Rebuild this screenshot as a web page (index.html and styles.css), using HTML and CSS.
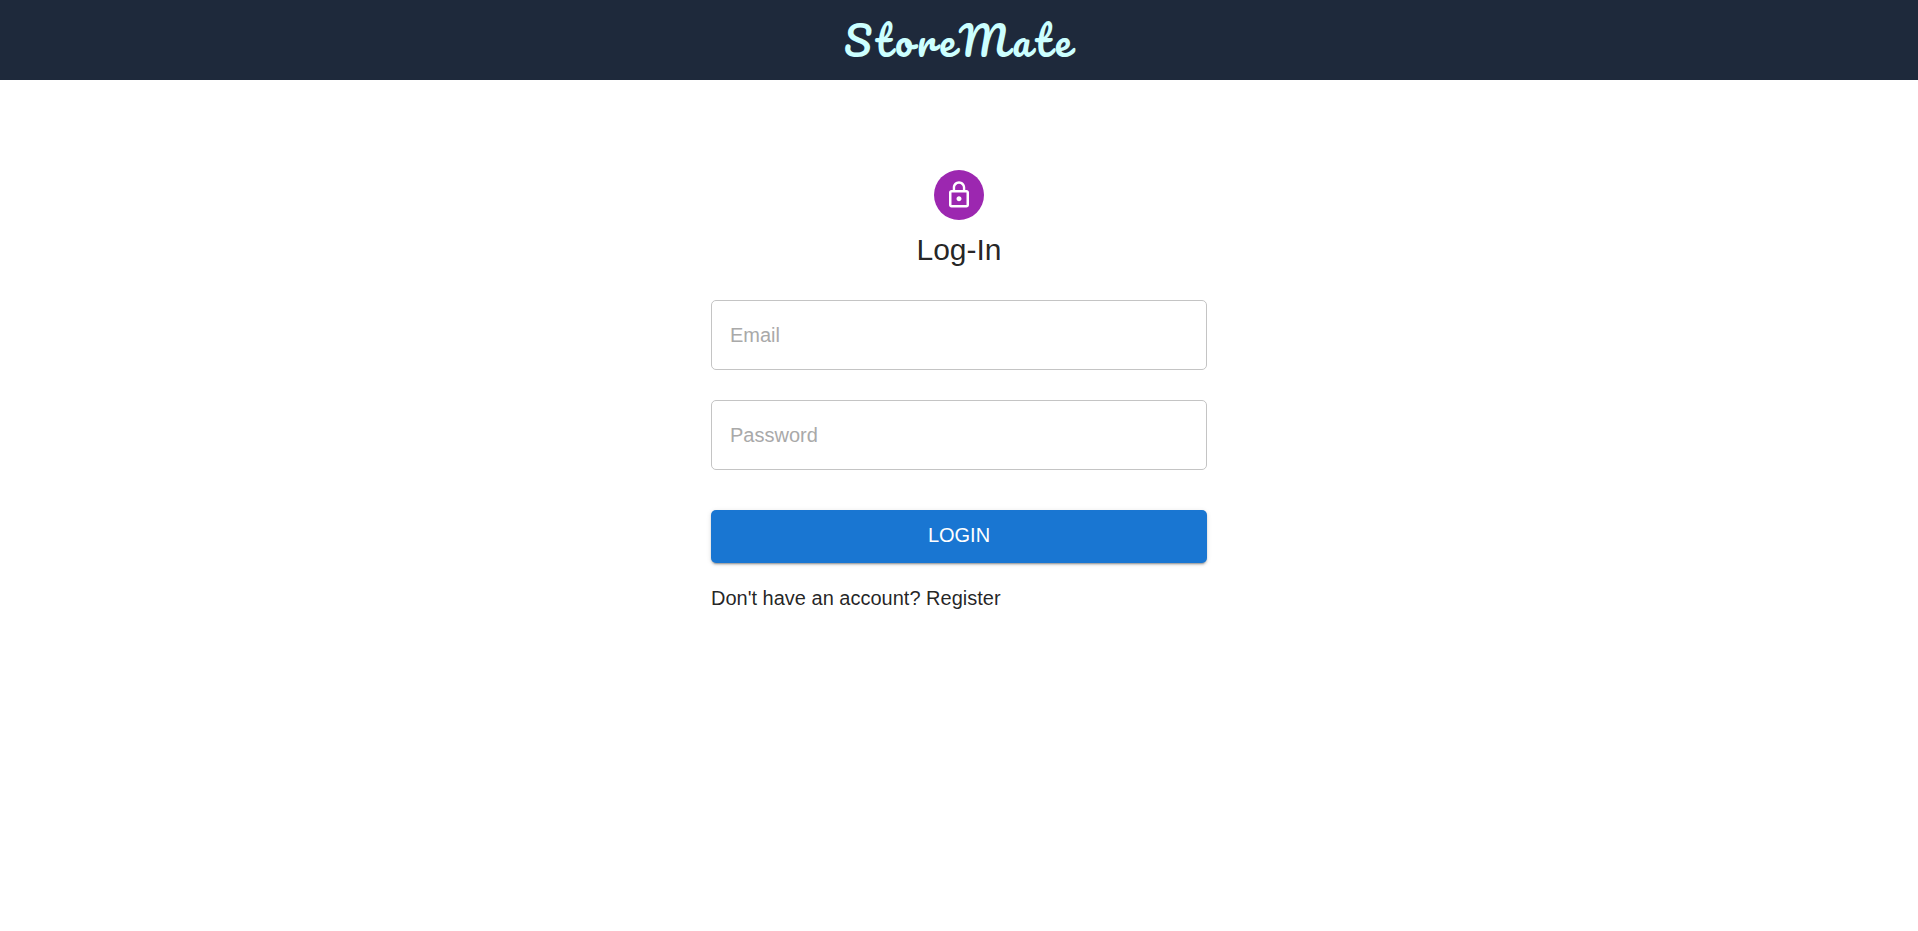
FILE: index.html
```html
<!DOCTYPE html>
<html lang="en">
<head>
<meta charset="utf-8">
<meta name="viewport" content="width=device-width, initial-scale=1">
<title>StoreMate</title>
<link rel="stylesheet" href="styles.css">
</head>
<body>
<header class="site-header">
  <div class="brand">StoreMate</div>
</header>
<main class="login">
  <div class="avatar">
    <svg class="avatar-icon" viewBox="0 0 24 24" aria-hidden="true"><path d="M12 17c1.100 0 2-.9 2-2s-.9-2-2-2-2 .9-2 2 .9 2 2 2zm6-9h-1V6c0-2.760-2.240-5-5-5S7 3.240 7 6v2H6c-1.100 0-2 .9-2 2v10c0 1.100.9 2 2 2h12c1.100 0 2-.9 2-2V10c0-1.100-.9-2-2-2zM8.900 6c0-1.710 1.390-3.100 3.100-3.100s3.100 1.390 3.100 3.100v2H8.900V6zM18 20H6V10h12v10z"/></svg>
  </div>
  <h1 class="title">Log-In</h1>
  <form class="form">
    <input class="field" type="email" name="email" placeholder="Email" aria-label="Email">
    <input class="field" type="password" name="password" placeholder="Password" aria-label="Password">
    <button class="submit" type="submit">LOGIN</button>
  </form>
  <a class="register" href="#register">Don't have an account? Register</a>
</main>
</body>
</html>
```
FILE: styles.css
```css
* {
  box-sizing: border-box;
}

body {
  margin: 0;
  background: #fff;
  color: rgba(0, 0, 0, 0.87);
  font-family: "Liberation Sans", Arial, sans-serif;
  font-size: 20px;
  line-height: 30px;
}

.site-header {
  display: flex;
  justify-content: center;
  align-items: center;
  height: 80px;
  background: #1e293b;
}

/* The wordmark is set in open, unjoined script letters. */
.brand {
  color: #ccffff;
  font-family: Pacifico, cursive;
  font-size: 40px;
  font-weight: 400;
  line-height: 60px;
  letter-spacing: 0.1em;
}

.login {
  display: flex;
  flex-direction: column;
  align-items: center;
  max-width: 556px;
  margin: 0 auto;
  padding: 90px 30px 30px;
}

.avatar {
  display: flex;
  justify-content: center;
  align-items: center;
  width: 50px;
  height: 50px;
  border-radius: 50%;
  background: #9c27b0;
}

.avatar-icon {
  width: 30px;
  height: 30px;
  fill: #fff;
}

.title {
  margin: 10px 0 30px;
  font-size: 30px;
  font-weight: 400;
  line-height: 40px;
}

.form {
  display: flex;
  flex-direction: column;
  gap: 30px;
  width: 100%;
}

.field {
  width: 100%;
  height: 70px;
  padding: 0 18px;
  border: 1px solid #c4c4c4;
  border-radius: 5px;
  background: #fff;
  color: inherit;
  font: inherit;
}

.field::placeholder {
  color: #a9a9a9;
  opacity: 1;
}

.submit {
  margin-top: 10px;
  padding: 10px 20px 13px;
  border: 0;
  border-radius: 5px;
  background: #1976d2;
  box-shadow: 0 3px 1px -2px rgba(0, 0, 0, 0.2), 0 2px 2px rgba(0, 0, 0, 0.14), 0 1px 5px rgba(0, 0, 0, 0.12);
  color: #fff;
  font: inherit;
  cursor: pointer;
}

.register {
  align-self: flex-start;
  margin-top: 20px;
  color: inherit;
  text-decoration: none;
}
```
